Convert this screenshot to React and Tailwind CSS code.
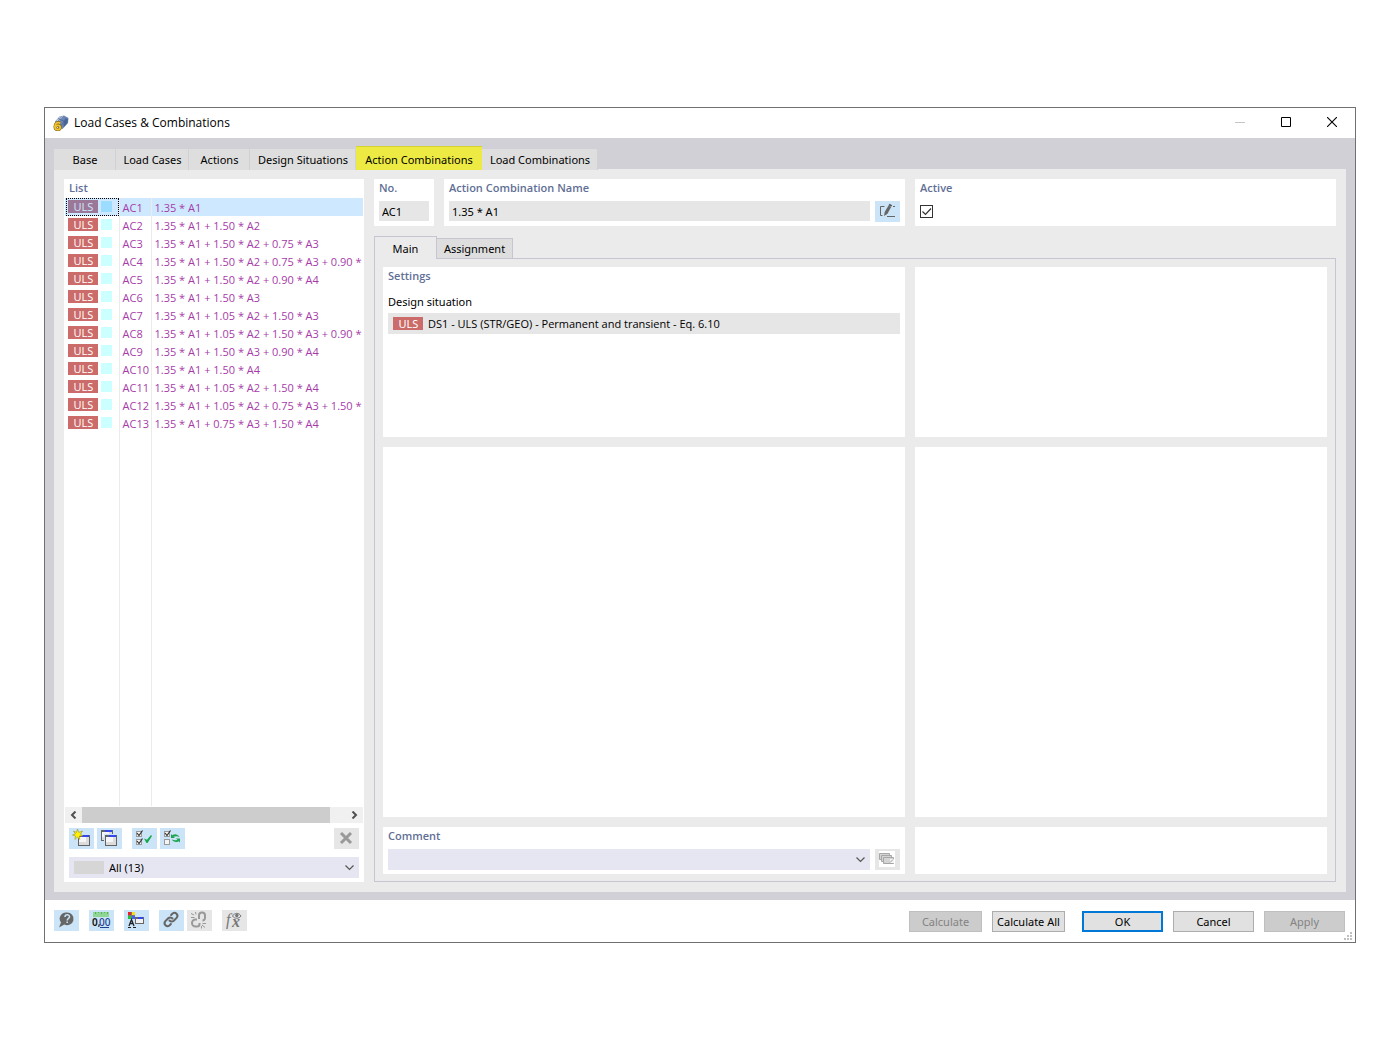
import React, { useState } from 'react';
import clsx from 'clsx';

const TABS = [
  { name: 'Base', width: 'w-[62px]' },
  { name: 'Load Cases', width: 'w-[73px]' },
  { name: 'Actions', width: 'w-[61px]' },
  { name: 'Design Situations', width: 'w-[106px]' },
  { name: 'Action Combinations', width: 'w-[126px]' },
  { name: 'Load Combinations', width: 'w-[116px]' },
];

const COMBINATIONS = [
  { no: 'AC1', name: '1.35 * A1' },
  { no: 'AC2', name: '1.35 * A1 + 1.50 * A2' },
  { no: 'AC3', name: '1.35 * A1 + 1.50 * A2 + 0.75 * A3' },
  { no: 'AC4', name: '1.35 * A1 + 1.50 * A2 + 0.75 * A3 + 0.90 *' },
  { no: 'AC5', name: '1.35 * A1 + 1.50 * A2 + 0.90 * A4' },
  { no: 'AC6', name: '1.35 * A1 + 1.50 * A3' },
  { no: 'AC7', name: '1.35 * A1 + 1.05 * A2 + 1.50 * A3' },
  { no: 'AC8', name: '1.35 * A1 + 1.05 * A2 + 1.50 * A3 + 0.90 *' },
  { no: 'AC9', name: '1.35 * A1 + 1.50 * A3 + 0.90 * A4' },
  { no: 'AC10', name: '1.35 * A1 + 1.50 * A4' },
  { no: 'AC11', name: '1.35 * A1 + 1.05 * A2 + 1.50 * A4' },
  { no: 'AC12', name: '1.35 * A1 + 1.05 * A2 + 0.75 * A3 + 1.50 *' },
  { no: 'AC13', name: '1.35 * A1 + 0.75 * A3 + 1.50 * A4' },
];

/* ---------- Icons ---------- */

// All toolbar icons are drawn on the full 25x21 button face
const ToolSvg = ({ children }) => (
  <svg width="25" height="21" viewBox="0 0 25 21" fill="none" aria-hidden="true">
    {children}
  </svg>
);

const MiniWindow = ({ x, y }) => (
  <g shapeRendering="crispEdges">
    <rect x={x} y={y} width="12" height="11" fill="#636363" />
    <rect x={x + 1} y={y + 2} width="10" height="8" fill="#dcdcdc" />
    <rect x={x + 1} y={y + 2} width="7" height="5" fill="#f6f6f6" />
    <rect x={x + 4} y={y} width="7" height="2" fill="#3347ee" />
  </g>
);

const NewIcon = () => (
  <ToolSvg>
    <MiniWindow x={9} y={7} />
    <path d="M8.500 1l1.200 3.400 3.800-1.400-2.200 3.200 2.700 1.600-3.600.3.300 3.400-2.200-2.500-2.600 2.500.6-3.500L3.500 7l3-1.100L4.500 3l3 1.400z" fill="#fff200" stroke="#9a8c20" strokeWidth=".6" />
  </ToolSvg>
);

const CopyIcon = () => (
  <ToolSvg>
    <MiniWindow x={4} y={2} />
    <rect x="7" y="6" width="13" height="12" fill="#cce4f7" />
    <MiniWindow x={8} y={7} />
  </ToolSvg>
);

const TickBox = ({ y, ticked }) => (
  <g>
    <rect x="4.500" y={y + 0.5} width="5" height="5" fill="#f4f4f4" stroke="#9a9a9a" />
    {ticked && <path d={`M5 ${y + 2}l2 2.500 3.500-5`} stroke="#333" strokeWidth="1.200" />}
  </g>
);

const CheckAllIcon = () => (
  <ToolSvg>
    <TickBox y={3} ticked />
    <TickBox y={11} ticked />
    <path d="M12 10.500l3 1.300L19 7l1 1-4.500 7h-1z" fill="#12a84b" />
  </ToolSvg>
);

const InvertIcon = () => (
  <ToolSvg>
    <TickBox y={3} ticked />
    <TickBox y={11} />
    <path d="M11 6v4h4l-1.500-1.200c2-1 4.300-.8 6 .2-1.800-3-5-3.400-7.200-1.800zM20 14.500v-4h-4l1.500 1.200c-2 .9-4 .6-5.800-.4 1.500 3 4.900 3.400 7 1.900z" fill="#1fa552" />
  </ToolSvg>
);

const DeleteIcon = () => (
  <ToolSvg>
    <path d="M7 5l10 10M17 5L7 15" stroke="#999" strokeWidth="3" />
  </ToolSvg>
);

const EditIcon = () => (
  <ToolSvg>
    <path d="M9.500 5.500h-4v9h2M18 5.500h2M12 15.500h8" stroke="#666" />
    <path d="M9 15l.7-4 3.800-6.500 2.700 1.500-3.900 7z" fill="#666" />
    <path d="M14 3.500l2.700 1.500" stroke="#555" strokeWidth="2" />
  </ToolSvg>
);

const CommentsIcon = () => (
  <ToolSvg>
    <rect x="4" y="2" width="16" height="16" fill="#fff" />
    <g fill="#d4d4d4" stroke="#a6a6a6">
      <path d="M4.500 4.500h10v6h-10z" />
      <path d="M6.500 6.500h10v6h-10z" />
      <path d="M8.500 8.500h10v6h-10z" />
    </g>
    <path d="M15 10h4v4h-4z" fill="#f4f4f4" />
    <path d="M15 13.500l3-3" stroke="#999" />
  </ToolSvg>
);

const HelpIcon = () => (
  <ToolSvg>
    <path d="M13 2.500a6.500 6.300 0 1 1-2.700 12L5 17.500l2-5A6.500 6.300 0 0 1 13 2.500z" fill="#666" />
    <path d="M11 7c0-3 4.500-2.800 4.500-.3 0 1.800-2.300 1.800-2.300 3.800M13.200 11.500v1.500" stroke="#cce4f7" strokeWidth="1.500" />
  </ToolSvg>
);

const UnitsIcon = () => (
  <ToolSvg>
    <rect x="4" y="2" width="16" height="5" fill="#8fd694" />
    <path d="M6.500 2v2M9.500 2v1M12.500 2v2M15.500 2v1M18.500 2v2" stroke="#5eae66" />
    <text x="3" y="16" fontSize="10" fontWeight="600" fill="#111">0,</text>
    <text x="10" y="16" fontSize="10" fontWeight="500" fill="#1d3f8f">00</text>
    <path d="M11 17.500h9" stroke="#1d3f8f" />
  </ToolSvg>
);

const DisplayIcon = () => (
  <ToolSvg>
    <g shapeRendering="crispEdges">
      <rect x="4" y="2" width="7" height="7" fill="#777" />
      <rect x="4" y="2" width="3" height="3" fill="#f02020" />
      <rect x="8" y="2" width="3" height="3" fill="#f3e01c" />
      <rect x="4" y="6" width="3" height="3" fill="#1fc53a" />
      <rect x="8" y="6" width="3" height="3" fill="#4b5cf5" />
      <rect x="11" y="7" width="9" height="7" fill="#666" />
      <rect x="12" y="9" width="7" height="4" fill="#f2f2f2" />
      <rect x="14" y="7" width="5" height="2" fill="#3347ee" />
    </g>
    <path d="M5 16l2.500-6.500L10 16M6 13.500h3" stroke="#222" strokeWidth="1.300" />
    <path d="M4 17.500h3M9 17.500h3" stroke="#222" />
  </ToolSvg>
);

const LinkIcon = () => (
  <ToolSvg>
    <g stroke="#666" strokeWidth="2" strokeLinecap="round">
      <path d="M10.500 10.500a3 3 0 0 0 4.300.2l3-3a3 3 0 0 0-4.200-4.200l-1.500 1.500" />
      <path d="M13.500 8.500a3 3 0 0 0-4.300-.2l-3 3a3 3 0 0 0 4.200 4.200l1.500-1.500" />
    </g>
  </ToolSvg>
);

const UnlinkIcon = () => (
  <ToolSvg>
    <g stroke="#999" strokeWidth="2">
      <path d="M12 9V5.500a3 3 0 0 1 6 0V8a2.500 2.500 0 0 1-2.500 2.500" />
      <path d="M10 9.500H8.500a3.500 3.500 0 0 0 0 7H10a2.500 2.500 0 0 0 2.500-2.500v-1" />
    </g>
    <path d="M4 3.500l3 1.500M8.500 2l.5 2.500M4 7.500h3.500M15.500 13.500H19M15 15l3 2.500M14.500 16v2.500" stroke="#999" />
  </ToolSvg>
);

const FormulaIcon = () => (
  <ToolSvg>
    <text x="4" y="15" fontSize="16" fontStyle="italic" fill="#777" className="font-['Liberation_Serif',serif]">f</text>
    <text x="10" y="17" fontSize="16" fontStyle="italic" fontWeight="700" fill="#777" className="font-['Liberation_Serif',serif]">x</text>
    <path d="M10.500 6c2-3.500 6.500-3.500 8.500 0-2 3-6.500 3-8.500 0z" stroke="#777" />
    <circle cx="14.800" cy="5.500" r="1.700" fill="#777" />
  </ToolSvg>
);

const AppIcon = () => (
  <svg width="16" height="16" viewBox="0 0 16 16" fill="none" aria-hidden="true">
    <path d="M2 6.500L6.500 1.500 11 .5l4.500 2.500-.5 5-5.500 6L5 13z" fill="#6c87b5" />
    <path d="M3 6l4-4.500 3-.5-5 6.500z" fill="#c3d1e8" />
    <path d="M10.500 8L13 3.500l2 .5-.5 4-4 4.500z" fill="#4a6697" />
    <path d="M5 3.500l8 3.500M8.500 1.500l-4 5.500M13 3L8 11" stroke="#42598a" strokeWidth=".6" />
    <path d="M7.200 8.300C4.500 6.500 2 8.500 2 11.500c0 4.200 5.200 4 5.200 1 0-2.700-3.700-2.800-4.700-.7" stroke="#8a6a10" strokeWidth="3" />
    <path d="M7.200 8.300C4.500 6.500 2 8.500 2 11.500c0 4.200 5.200 4 5.200 1 0-2.700-3.700-2.800-4.700-.7" stroke="#f0c431" strokeWidth="1.800" />
  </svg>
);

const Chevron = () => (
  <svg width="10" height="6" viewBox="0 0 10 6" fill="none" aria-hidden="true">
    <path d="M.5.5l4 4 4-4" stroke="#555" strokeWidth="1.200" />
  </svg>
);

const ScrollArrow = ({ d }) => (
  <svg width="7" height="8" viewBox="0 0 7 8" fill="none" aria-hidden="true">
    <path d={d} stroke="#505050" strokeWidth="2" />
  </svg>
);

/* ---------- Building blocks ---------- */

const ToolButton = ({ label, disabled, children }) => (
  <button
    type="button"
    aria-label={label}
    disabled={disabled}
    className={clsx('h-[21px] w-[25px] shrink-0', disabled ? 'bg-[#e6e6e6]' : 'bg-[#cce4f7]')}
  >
    {children}
  </button>
);

const Heading = ({ children, className }) => (
  <h2 className={clsx("font-['Open_Sans',sans-serif] text-[11px] leading-[18px] font-semibold text-[#5f6f96]", className)}>
    {children}
  </h2>
);

const Card = ({ children, className }) => (
  <section className={clsx('bg-white px-[5px]', className)}>{children}</section>
);

const DialogButton = ({ children, disabled, primary, wide }) => (
  <button
    type="button"
    disabled={disabled}
    className={clsx(
      'flex h-[21px] items-center justify-center whitespace-nowrap',
      wide ? 'w-[81px]' : 'w-[73px]',
      primary ? 'border-2 border-[#0078d7]' : 'border',
      disabled ? 'border-[#bfbfbf] bg-[#cccccc] text-[#838383]' : 'bg-[#e1e1e1]',
      !disabled && !primary && 'border-[#adadad]'
    )}
  >
    <span className="leading-[17px]">{children}</span>
  </button>
);

const UlsBadge = ({ selected }) => (
  <span
    className={clsx(
      'block h-[13px] w-[30px] pl-px text-center leading-[13px]',
      selected ? 'bg-[#9c7898] text-[#cde8ff]' : 'bg-[#cb6c6a] text-white'
    )}
  >
    ULS
  </span>
);

/* ---------- Sections ---------- */

const TitleBar = () => (
  <header className="flex h-[30px] items-center justify-between bg-white pl-2">
    <div className="flex items-center gap-[5px]">
      <AppIcon />
      <h1 className="font-['Open_Sans',sans-serif] text-[12px] leading-4">Load Cases &amp; Combinations</h1>
    </div>
    <div className="flex self-start">
      <button type="button" aria-label="Minimize" disabled className="flex h-7 w-[46px] items-center justify-center">
        <svg width="10" height="10" viewBox="0 0 10 10"><path d="M0 5.500h10" stroke="#c4c4c4" /></svg>
      </button>
      <button type="button" aria-label="Maximize" className="flex h-7 w-[46px] items-center justify-center">
        <svg width="10" height="10" viewBox="0 0 10 10" fill="none"><path d="M.5.5h9v9h-9z" stroke="#000" /></svg>
      </button>
      <button type="button" aria-label="Close" className="flex h-7 w-[46px] items-center justify-center">
        <svg width="10" height="10" viewBox="0 0 10 10"><path d="M0 0l10 10M10 0L0 10" stroke="#000" strokeWidth="1.100" /></svg>
      </button>
    </div>
  </header>
);

const CombinationList = ({ selected, onSelect }) => (
  <aside className="flex w-[300px] shrink-0 flex-col bg-white">
    <Heading className="h-[19px] px-[5px]">List</Heading>
    <div className="mx-px flex-1">
      <table className="h-full w-full table-fixed border-collapse font-['Open_Sans',sans-serif] text-[11px] text-[#a63ba8]">
        <colgroup>
          <col className="w-[54px]" />
          <col className="w-8" />
          <col />
        </colgroup>
        <tbody>
          {COMBINATIONS.map(({ no, name }) => {
            const isSelected = no === selected;
            return (
              <tr
                key={no}
                onClick={() => onSelect(no)}
                className={clsx('h-[18px] cursor-default', isSelected && 'bg-[#cde8ff]')}
              >
                <td className="h-[18px] border-r border-[#ebebeb] p-0">
                  <div
                    className={clsx(
                      'ml-px flex h-[18px] w-[53px] items-start gap-[3px] border pt-px pl-px',
                      isSelected ? 'border-dotted border-black' : 'border-transparent'
                    )}
                  >
                    <UlsBadge selected={isSelected} />
                    <span className={clsx('mt-px size-[11px]', isSelected ? 'bg-[#9bdcff]' : 'bg-[#ccffff]')} />
                  </div>
                </td>
                <td className="h-[18px] border-r border-[#ebebeb] pt-0.5 pr-0 pb-0 pl-[3px] leading-4">{no}</td>
                <td className="h-[18px] overflow-hidden pt-0.5 pr-0 pb-0 pl-[3px] leading-4 whitespace-nowrap">{name}</td>
              </tr>
            );
          })}
          {/* Carries the column lines down to the scrollbar */}
          <tr aria-hidden="true">
            <td className="border-r border-[#ebebeb] p-0" />
            <td className="border-r border-[#ebebeb] p-0" />
            <td className="p-0" />
          </tr>
        </tbody>
      </table>
    </div>

    <div className="mx-px mt-px flex h-4 bg-[#f0f0f0]">
      <button type="button" aria-label="Scroll left" className="flex w-[17px] items-center justify-center">
        <ScrollArrow d="M5.500.5L2 4l3.500 3.500" />
      </button>
      <div className="flex flex-1">
        <div className="w-[94%] bg-[#cdcdcd]" />
      </div>
      <button type="button" aria-label="Scroll right" className="flex w-[17px] items-center justify-center">
        <ScrollArrow d="M1.500.5L5 4 1.500 7.500" />
      </button>
    </div>

    <div className="flex gap-[3px] px-[5px] pt-[5px]">
      <ToolButton label="New"><NewIcon /></ToolButton>
      <ToolButton label="Copy"><CopyIcon /></ToolButton>
      <span className="w-1" />
      <ToolButton label="Select all"><CheckAllIcon /></ToolButton>
      <ToolButton label="Invert selection"><InvertIcon /></ToolButton>
      <span className="flex-1" />
      <ToolButton label="Delete" disabled><DeleteIcon /></ToolButton>
    </div>

    <div className="relative mx-[5px] mt-2 mb-1">
      <select aria-label="Filter" className="h-[21px] w-full appearance-none bg-[#e6e6f2] pl-10 text-[11px]">
        <option>All (13)</option>
      </select>
      <span className="pointer-events-none absolute top-1 left-[5px] h-[13px] w-[30px] bg-[#d6d6d6]" />
      <span className="pointer-events-none absolute top-2 right-1"><Chevron /></span>
    </div>
  </aside>
);

const GeneralRow = ({ item }) => {
  const [active, setActive] = useState(true);

  return (
    <div className="grid h-[47px] grid-cols-[minmax(0,531fr)_minmax(0,421fr)] gap-[10px]">
      <div className="flex gap-[10px]">
        <Card className="w-[60px]">
          <Heading className="mb-1"><label htmlFor="no">No.</label></Heading>
          <input id="no" readOnly value={item.no} className="h-5 w-[50px] bg-[#e6e6e6] px-[3px]" />
        </Card>
        <Card className="flex-1">
          <Heading className="mb-1"><label htmlFor="name">Action Combination Name</label></Heading>
          <div className="flex gap-[5px]">
            <input id="name" readOnly value={item.name} className="h-5 min-w-0 flex-1 bg-[#e6e6e6] px-[3px]" />
            <ToolButton label="Edit name"><EditIcon /></ToolButton>
          </div>
        </Card>
      </div>
      <Card>
        <Heading className="mb-2"><label htmlFor="active">Active</label></Heading>
        <div className="relative size-[13px]">
          <input
            id="active"
            type="checkbox"
            checked={active}
            onChange={(e) => setActive(e.target.checked)}
            className="peer block size-[13px] appearance-none border border-[#333] bg-white"
          />
          <svg width="13" height="13" viewBox="0 0 13 13" fill="none" className="pointer-events-none absolute inset-0 hidden peer-checked:block">
            <path d="M2.500 6.500l3 3 5.500-6" stroke="#333" strokeWidth="1.200" />
          </svg>
        </div>
      </Card>
    </div>
  );
};

const MainTab = () => (
  <div className="grid flex-1 grid-cols-[minmax(0,522fr)_minmax(0,412fr)] grid-rows-[170px_1fr_47px] gap-[10px] border border-[#c6c5d1] px-2 pt-2 pb-[7px]">
    <Card>
      <Heading>Settings</Heading>
      <p className="mt-2 leading-[18px]">Design situation</p>
      <div className="mt-0.5 flex h-[21px] items-center gap-[5px] bg-[#e6e6e6] pl-[5px]">
        <UlsBadge />
        <span className="font-['Open_Sans',sans-serif]">DS1 - ULS (STR/GEO) - Permanent and transient - Eq. 6.10</span>
      </div>
    </Card>
    <Card />
    <Card />
    <Card />
    <Card>
      <Heading className="mb-1"><label htmlFor="comment">Comment</label></Heading>
      <div className="flex gap-[5px]">
        <div className="relative flex-1">
          <select id="comment" className="block h-[21px] w-full appearance-none bg-[#e6e6f2]">
            <option></option>
          </select>
          <span className="pointer-events-none absolute top-2 right-1"><Chevron /></span>
        </div>
        <ToolButton label="Comment templates" disabled><CommentsIcon /></ToolButton>
      </div>
    </Card>
    <Card />
  </div>
);

const Footer = () => (
  <footer className="relative flex h-[42px] items-start justify-between bg-white pr-[10px] pl-[9px]">
    <div className="flex gap-[10px] pt-[10px]">
      <ToolButton label="Help"><HelpIcon /></ToolButton>
      <ToolButton label="Units and decimal places"><UnitsIcon /></ToolButton>
      <ToolButton label="Display properties"><DisplayIcon /></ToolButton>
      <div className="flex gap-[3px]">
        <ToolButton label="Link"><LinkIcon /></ToolButton>
        <ToolButton label="Unlink" disabled><UnlinkIcon /></ToolButton>
      </div>
      <ToolButton label="Formula" disabled><FormulaIcon /></ToolButton>
    </div>
    <div className="flex gap-[10px] pt-[11px]">
      <DialogButton disabled>Calculate</DialogButton>
      <DialogButton>Calculate All</DialogButton>
      <div className="flex gap-[10px] pl-[7px]">
        <DialogButton wide primary>OK</DialogButton>
        <DialogButton wide>Cancel</DialogButton>
        <DialogButton wide disabled>Apply</DialogButton>
      </div>
    </div>
    <svg width="8" height="8" viewBox="0 0 8 8" className="absolute right-[3px] bottom-0.5" aria-hidden="true">
      <path d="M6 0h2v2H6zM6 3h2v2H6zM6 6h2v2H6zM3 3h2v2H3zM3 6h2v2H3zM0 6h2v2H0z" fill="#bfbfbf" />
    </svg>
  </footer>
);

export default function App() {
  const [selected, setSelected] = useState('AC1');
  const item = COMBINATIONS.find((c) => c.no === selected);

  return (
    <div className="flex min-h-screen bg-white px-11 py-[107px] font-['Noto_Sans',sans-serif] text-[11px] leading-4 text-black">
      <div className="flex min-w-0 flex-1 flex-col border border-[#707070]">
        <TitleBar />

        <div className="flex flex-1 flex-col bg-[#d1d0d6] px-[9px] pt-2 pb-2">
          <nav className="relative z-10 -mb-px flex items-end" role="tablist">
            {TABS.map(({ name, width }) => {
              const isActive = name === 'Action Combinations';
              return (
                <button
                  key={name}
                  type="button"
                  role="tab"
                  aria-selected={isActive}
                  className={clsx(
                    'text-center whitespace-nowrap',
                    width,
                    isActive
                      ? 'h-6 border-t border-[#d6d331] bg-[#edeb43] pt-0.5'
                      : 'h-[21px] border-r border-[#d1d0d6] bg-[#dedede] pl-px'
                  )}
                >
                  {name}
                </button>
              );
            })}
          </nav>

          <main className="flex flex-1 gap-[10px] bg-[#ebebeb] p-[10px]">
            <CombinationList selected={selected} onSelect={setSelected} />

            <div className="flex min-w-0 flex-1 flex-col">
              <GeneralRow item={item} />
              <div className="relative z-10 mt-[10px] -mb-px flex items-end" role="tablist">
                <button type="button" role="tab" aria-selected="true" className="h-[23px] w-[63px] border border-b-0 border-[#c6c5d1] bg-[#ebebeb] pt-0.5">
                  Main
                </button>
                <button type="button" role="tab" aria-selected="false" className="h-[21px] w-[76px] border border-l-0 border-[#c6c5d1] bg-[#dedede]">
                  Assignment
                </button>
              </div>
              <MainTab />
            </div>
          </main>
        </div>

        <Footer />
      </div>
    </div>
  );
}
